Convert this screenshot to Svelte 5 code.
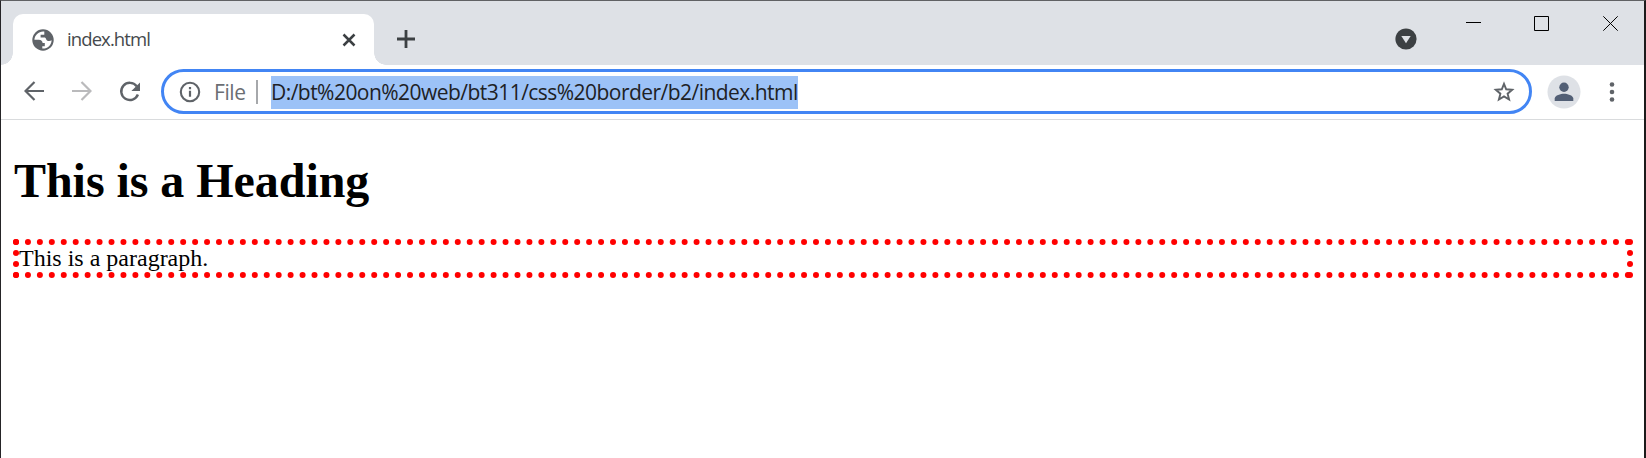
<script>
  const url = 'D:/bt%20on%20web/bt311/css%20border/b2/index.html';
  const across = Array.from({ length: 136 }, (_, i) => 3 + i * 11.94);
  const down = [14, 25];
</script>

<div class="window">
  <header class="tabs">
    <div class="tab">
      <svg class="globe" width="24" height="24" viewBox="0 0 24 24"><circle cx="12" cy="12" r="10.7" fill="#5f6368" /><path d="M13.3 3.5C8.3 2.8 3.7 6.6 3.4 11.8h4.4c2.4 0 3.8 1.4 3.8 3.2h2.2v3.3h-2.5v2.2c4.9.5 9.2-3.3 9.3-8.3-1.2 1-3.4 1-4.6.2-1-.7-1-2.5-2.1-2.9H9.6V6.7h3.7z" fill="#fff" /></svg>
      <span class="title">index.html</span>
      <svg width="14" height="14" viewBox="0 0 14 14"><path d="M1.5 1.5l11 11m0-11l-11 11" stroke="#3c4043" stroke-width="2.5" /></svg>
    </div>
    <svg class="plus" width="18" height="18" viewBox="0 0 18 18"><path d="M9 0v18M0 9h18" stroke="#3c4043" stroke-width="2.8" /></svg>
    <div class="controls">
      <svg class="search" width="22" height="22" viewBox="0 0 22 22"><circle cx="11" cy="11" r="10.6" fill="#3c4043" /><path d="M6.3 8h9.4L11 15.3z" fill="#dee1e6" /></svg>
      <svg width="15" height="15" viewBox="0 0 15 15"><path d="M0 6.5h15" stroke="#000" /></svg>
      <svg width="15" height="15" viewBox="0 0 15 15"><path d="M.5.5h14v14H.5z" fill="none" stroke="#000" /></svg>
      <svg class="close" width="15" height="15" viewBox="0 0 15 15"><path d="M.3.3l14.4 14.4m0-14.4L.3 14.7" stroke="#000" /></svg>
    </div>
  </header>
  <nav class="toolbar">
    <svg class="back" width="20" height="20" viewBox="0 0 20 20"><path d="M20 10H1.8M10.5 1l-9 9 9 9" fill="none" stroke="#5f6368" stroke-width="2.2" /></svg>
    <svg class="forward" width="20" height="20" viewBox="0 0 20 20"><path d="M0 10h18.2M9.5 1l9 9-9 9" fill="none" stroke="#bababc" stroke-width="2.2" /></svg>
    <svg class="reload" width="22" height="22" viewBox="0 0 22 22"><path d="M17.7 5.2A8.6 8.6 0 1 0 18.9 13.5" fill="none" stroke="#5f6368" stroke-width="2.4" /><path d="M21 1.5v8.6h-8.6z" fill="#5f6368" /></svg>
    <div class="address">
      <svg class="info" width="22" height="22" viewBox="0 0 22 22"><circle cx="11" cy="11" r="9.2" fill="none" stroke="#5f6368" stroke-width="2.1" /><path d="M11 6v2.2M11 9.8v6" stroke="#5f6368" stroke-width="2.2" /></svg>
      <span class="scheme">File</span>
      <i></i>
      <span class="url">{url}</span>
      <svg class="star" width="22" height="22" viewBox="0 0 22 22"><path d="M11 2.8l2.2 5.5 6 .5-4.6 3.9 1.5 5.8-5.1-3.1-5.1 3.1 1.5-5.8-4.6-3.9 6-.5z" fill="none" stroke="#5f6368" stroke-width="1.9" /></svg>
    </div>
    <svg class="avatar" width="34" height="34" viewBox="0 0 34 34"><circle cx="17" cy="17" r="16.5" fill="#dee1e6" /><circle cx="17" cy="12.3" r="4.7" fill="#525f75" /><path d="M7.7 26v-2.5c0-3.2 6.2-4.8 9.3-4.8s9.3 1.6 9.3 4.8V26z" fill="#525f75" /></svg>
    <svg class="menu" width="6" height="20" viewBox="0 0 6 20"><g fill="#5f6368"><circle cx="3" cy="2.5" r="2.3" /><circle cx="3" cy="10" r="2.3" /><circle cx="3" cy="17.5" r="2.3" /></g></svg>
  </nav>
  <main>
    <h1>This is a Heading</h1>
    <div class="para">
      <svg width="1620" height="39" viewBox="0 0 1620 39" fill="#f00">
        {#each across as x}
          <circle cx={x} cy="3" r="3" /><circle cx={x} cy="36" r="3" />
        {/each}
        {#each [3, 1617] as x}
          {#each [3, ...down, 36] as y}
            <circle cx={x} cy={y} r="3" />
          {/each}
        {/each}
      </svg>
      <p>This is a paragraph.</p>
    </div>
  </main>
</div>

<style>
  .window { box-sizing: border-box; width: 1646px; height: 458px; overflow: hidden; background: #fff; border-top: 1px solid #606164; border-left: 1px solid #252427; border-right: 2px solid #1c1b1b; font-family: "Open Sans", sans-serif; }
  svg { display: block; flex: none; }
  .tabs { display: flex; height: 64px; background: #dee1e6; }
  .tab { position: relative; box-sizing: border-box; display: flex; align-items: center; width: 361px; height: 51px; margin: 13px 0 0 12px; padding: 0 18px 0 18px; border-radius: 10px 10px 0 0; background: #fff; }
  .tab::before, .tab::after { content: ""; position: absolute; bottom: 0; width: 12px; height: 12px; }
  .tab::before { left: -12px; background: radial-gradient(circle at 0 0, transparent 11.5px, #fff 12px); }
  .tab::after { right: -12px; background: radial-gradient(circle at 100% 0, transparent 11.5px, #fff 12px); }
  .title { margin: 0 auto 3px 12px; color: #45494d; font-size: 18.5px; letter-spacing: -0.9px; }
  .plus { margin: 29px 0 0 23px; }
  .controls { display: flex; gap: 53px; margin: 15px 26px 0 auto; }
  .search { margin: 12px -4px 0 0; }
  .close { margin-left: 1px; }
  .toolbar { box-sizing: border-box; display: flex; align-items: center; height: 55px; padding: 0 0 1px 23px; border-bottom: 1px solid #d9dbdd; }
  .back, .forward { margin-bottom: 1px; }
  .forward { margin-left: 28px; }
  .reload { margin-left: 27px; }
  .address { box-sizing: border-box; display: flex; align-items: center; width: 1371px; height: 45px; margin-left: 20px; padding: 0 14px 0 15px; border: 3px solid #4285f4; border-radius: 23px; font-size: 21px; white-space: nowrap; }
  .info { margin-top: 1px; }
  .scheme { width: 32px; margin: 1px 0 0 13px; color: #6b6e73; letter-spacing: -0.4px; }
  .address i { width: 2px; height: 24px; margin-left: 10px; background: #a6a8ab; }
  .url { width: 527px; height: 33px; margin-left: 13px; margin-top: 1px; background: #9cc2f7; color: #202124; line-height: 33px; letter-spacing: -0.54px; }
  .star { margin-left: auto; }
  .avatar { margin-left: 15px; }
  .menu { margin-left: 28px; }
  main { padding: 0 12px; color: #000; font-family: "Liberation Serif", serif; }
  h1 { margin: 33px 0 0 1px; font-size: 48px; line-height: 55px; letter-spacing: -0.05px; }
  .para { position: relative; height: 39px; margin-top: 31px; }
  .para svg { position: absolute; inset: 0; }
  p { margin: 0; padding: 6px; font-size: 24px; line-height: 27px; }
</style>
